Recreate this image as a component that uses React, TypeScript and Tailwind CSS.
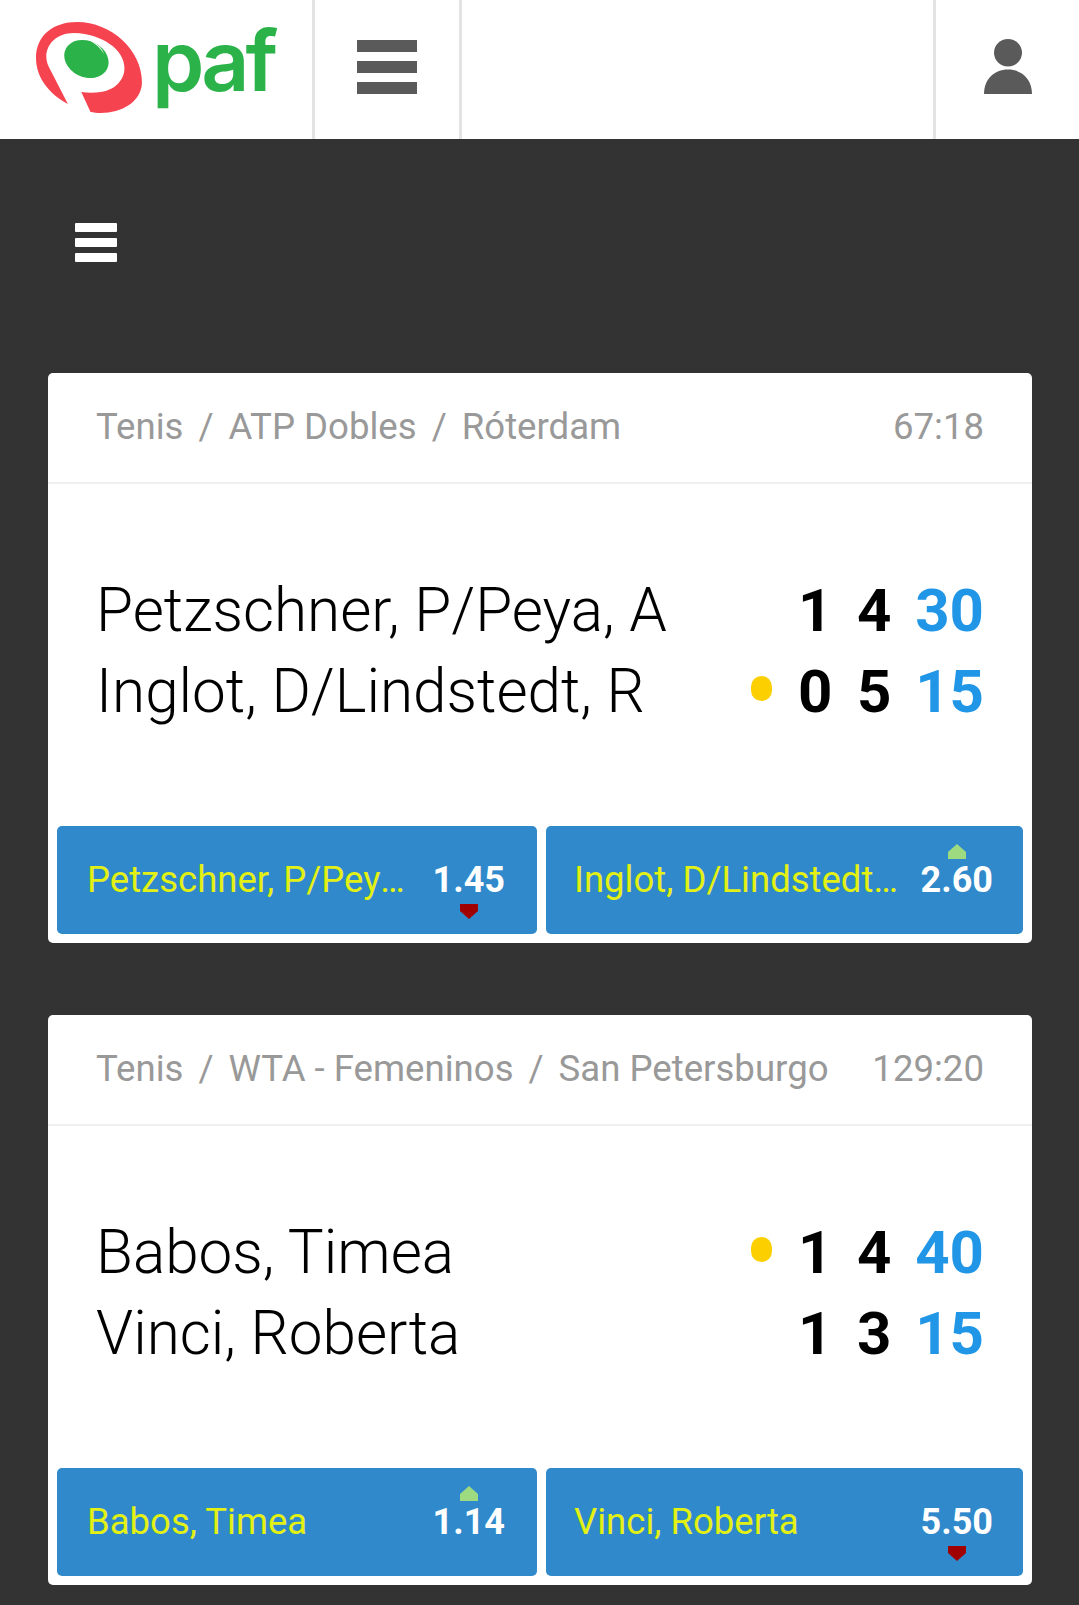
import React from "react";

type Row = { name: string; serving: boolean; sets: [string, string]; points: string };
type Odd = { name: string; price: string; move?: "up" | "down" };
type Match = { path: string[]; time: string; rows: Row[]; odds: Odd[] };

const matches: Match[] = [
  {
    path: ["Tenis", "ATP Dobles", "Róterdam"],
    time: "67:18",
    rows: [
      { name: "Petzschner, P/Peya, A", serving: false, sets: ["1", "4"], points: "30" },
      { name: "Inglot, D/Lindstedt, R", serving: true, sets: ["0", "5"], points: "15" },
    ],
    odds: [
      { name: "Petzschner, P/Peya, A", price: "1.45", move: "down" },
      { name: "Inglot, D/Lindstedt, R", price: "2.60", move: "up" },
    ],
  },
  {
    path: ["Tenis", "WTA - Femeninos", "San Petersburgo"],
    time: "129:20",
    rows: [
      { name: "Babos, Timea", serving: true, sets: ["1", "4"], points: "40" },
      { name: "Vinci, Roberta", serving: false, sets: ["1", "3"], points: "15" },
    ],
    odds: [
      { name: "Babos, Timea", price: "1.14", move: "up" },
      { name: "Vinci, Roberta", price: "5.50", move: "down" },
    ],
  },
];

function Logo() {
  return (
    <div className="flex items-center">
      <svg width="109" height="94" viewBox="34 21 106 94" preserveAspectRatio="none" className="mt-[-4px] shrink-0">
        <path
          d="M66 104C48 94 35 78 35 58C35 35 52 22 75 22C108 22 138 50 138 82C138 102 118 113 98 113C94 113 91 112.5 88 112L79 92C85 93 92 93 98 92C112 90 121 80 121 68C121 50 100 34 72 33C55 33 45 44 45 57C45 62 47 66 49 70Z"
          fill="#f5434f"
        />
        <ellipse cx="84" cy="59" rx="22.5" ry="18" transform="rotate(28 84 59)" fill="#2bb34a" />
        <path d="M86 40C93 42 99 47 101 54C97 47 92 43 86 40Z" fill="#fff" />
      </svg>
      <span className="ml-[8px] mt-[-18px] font-['Inter',sans-serif] text-[84px] leading-none font-semibold tracking-[-4px] text-[#2bb34a]">
        paf
      </span>
    </div>
  );
}

function OddButton({ odd, className }: { odd: Odd; className: string }) {
  return (
    <div className={`flex h-[108px] items-center rounded-[5px] bg-[#2f89cb] ${className}`}>
      <span className="mr-[20px] min-w-0 flex-1 truncate text-[36.5px] text-[#e3f014]">{odd.name}</span>
      <span className="relative shrink-0 text-[36px] font-bold text-white">
        {odd.price}
        {odd.move === "up" && (
          <svg width="18" height="15" viewBox="0 0 18 15" className="absolute left-1/2 top-[-9px] -translate-x-1/2">
            <path d="M9 0L18 8V15H0V8Z" fill="#9edb80" />
          </svg>
        )}
        {odd.move === "down" && (
          <svg width="18" height="15" viewBox="0 0 18 15" className="absolute bottom-[-12px] left-1/2 -translate-x-1/2">
            <path d="M0 0H18V7L9 15L0 7Z" fill="#a00000" />
          </svg>
        )}
      </span>
    </div>
  );
}

function MatchCard({ match }: { match: Match }) {
  return (
    <div className="rounded-[5px] bg-white">
      {/* Breadcrumb */}
      <div className="flex h-[111px] items-center justify-between border-b-2 border-[#f0f0f0] px-[48px] text-[36.6px] text-[#999999]">
        <div className="flex gap-[15px]">
          {match.path.map((part, i) => (
            <React.Fragment key={part}>
              {i > 0 && <span>/</span>}
              <span>{part}</span>
            </React.Fragment>
          ))}
        </div>
        <span>{match.time}</span>
      </div>

      {/* Players and score */}
      <div className="pb-[94px] pl-[48px] pr-[48px] pt-[86px]">
        {match.rows.map((row) => (
          <div key={row.name} className="flex h-[81px] items-center">
            <span className="mt-[1px] flex-1 text-[60.2px] font-light text-black">{row.name}</span>
            {row.serving && <span className="mr-[26px] mt-[-6px] h-[25px] w-[21px] rounded-[11px] bg-[#fcd000]" />}
            <span className="w-[34px] text-center text-[60px] font-bold text-black">{row.sets[0]}</span>
            <span className="ml-[25px] w-[34px] text-center text-[60px] font-bold text-black">{row.sets[1]}</span>
            <span className="w-[93px] text-right text-[60px] font-bold text-[#2196e6]">{row.points}</span>
          </div>
        ))}
      </div>

      {/* Odds */}
      <div className="flex gap-[9px] px-[9px] pb-[9px]">
        <OddButton odd={match.odds[0]} className="w-[480px] pl-[30px] pr-[32px]" />
        <OddButton odd={match.odds[1]} className="min-w-0 flex-1 pl-[28px] pr-[30px]" />
      </div>
    </div>
  );
}

export default function App() {
  return (
    <div className="h-[1605px] overflow-hidden bg-[#333333] font-['Roboto',sans-serif]">
      <div className="flex h-[139px] bg-white">
        <div className="flex w-[315px] items-center border-r-[3px] border-[#e3e3e3] pl-[35px]">
          <Logo />
        </div>
        <div className="flex w-[147px] flex-col items-center justify-center gap-[9px] border-r-[3px] border-[#e3e3e3] pb-[6px]">
          <span className="h-[12px] w-[60px] bg-[#5a5a5a]" />
          <span className="h-[12px] w-[60px] bg-[#5a5a5a]" />
          <span className="h-[12px] w-[60px] bg-[#5a5a5a]" />
        </div>
        <div className="w-[474px] border-r-[3px] border-[#e3e3e3]" />
        <div className="flex flex-1 items-center justify-center pb-[6px]">
          <svg width="48" height="55" viewBox="0 0 48 56" preserveAspectRatio="none">
            <circle cx="24" cy="14" r="14" fill="#5a5a5a" />
            <path d="M0 56C0 41 10 31 24 31C38 31 48 41 48 56Z" fill="#5a5a5a" />
          </svg>
        </div>
      </div>

      <div className="pl-[48px] pr-[47px] pt-[84px]">
        <div className="ml-[27px] flex w-[42px] flex-col gap-[6px]">
          <span className="h-[9px] rounded-[1px] bg-white" />
          <span className="h-[9px] rounded-[1px] bg-white" />
          <span className="h-[9px] rounded-[1px] bg-white" />
        </div>
        <div className="mt-[111px] flex flex-col gap-[72px]">
          {matches.map((match) => (
            <MatchCard key={match.time} match={match} />
          ))}
        </div>
      </div>
    </div>
  );
}
